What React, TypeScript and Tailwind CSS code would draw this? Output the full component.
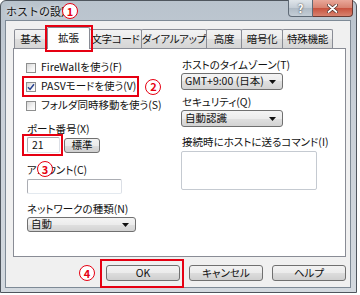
const RED = "border-[#e60012]";

function Circled({ n, className }: { n: string; className?: string }) {
  return (
    <span
      className={`flex h-[16px] w-[16px] items-center justify-center rounded-full border-[1.5px] ${RED} bg-white text-[11px] font-bold leading-none text-[#e60012] ${className ?? ""}`}
    >
      {n}
    </span>
  );
}

function CheckBox({ checked }: { checked?: boolean }) {
  return (
    <span className="flex h-[10px] w-[10px] shrink-0 items-center justify-center border border-[#8e8f8f] bg-[linear-gradient(135deg,#d6d6d6_0%,#f4f4f4_60%,#fdfdfd_100%)]">
      {checked && (
        <svg width="8" height="8" viewBox="0 0 8 8" aria-hidden="true">
          <path d="M1 4.3L3 6.4 7 1.2" stroke="#26418f" strokeWidth="1.5" fill="none" />
        </svg>
      )}
    </span>
  );
}

function Arrow() {
  return (
    <svg width="7" height="4" viewBox="0 0 7 4" aria-hidden="true" className="shrink-0">
      <path d="M0 0h7L3.5 4z" fill="#111" />
    </svg>
  );
}

function Select({ value, className }: { value: string; className: string }) {
  return (
    <div
      className={`flex items-center justify-between rounded-[3px] border border-[#707070] bg-[linear-gradient(#f4f4f4_0%,#ececec_50%,#e0e0e0_50%,#d3d3d3_100%)] pl-[3px] pr-[6px] ${className}`}
    >
      <span className="whitespace-nowrap leading-none">{value}</span>
      <Arrow />
    </div>
  );
}

function Label({ text, className }: { text: string; className?: string }) {
  return <div className={`flex h-[14px] items-center whitespace-nowrap leading-none ${className ?? ""}`}>{text}</div>;
}

function Check({ text, checked }: { text: string; checked?: boolean }) {
  return (
    <div className="flex h-[19px] items-center gap-[5px]">
      <CheckBox checked={checked} />
      <span className="whitespace-nowrap leading-none">{text}</span>
    </div>
  );
}

const btn =
  "flex h-[16px] w-[74px] items-center justify-center rounded-[3px] border border-[#707070] bg-[linear-gradient(#f2f2f2_0%,#ebebeb_50%,#dddddd_50%,#cfcfcf_100%)] leading-none";

const tabs = [
  { label: "基本", w: "w-[33px]" },
  { label: "拡張", w: "w-[43px]", sel: true },
  { label: "文字コード", w: "w-[53px]" },
  { label: "ダイアルアップ", w: "w-[66px]" },
  { label: "高度", w: "w-[36px]" },
  { label: "暗号化", w: "w-[42px]" },
  { label: "特殊機能", w: "w-[51px]" },
];

export default function App() {
  return (
    <div className="h-[295px] w-[360px] bg-white font-['Noto_Sans_CJK_JP',sans-serif] text-[10.5px] text-[#111] [font-feature-settings:'palt']">
      <div className="flex h-[293px] w-[357px] flex-col rounded-t-[6px] border border-[#4f565e] bg-[linear-gradient(180deg,#b9c3cd_0%,#c9d0d8_35%,#d3d9df_100%)] pb-[4px] pl-[4px] pr-[5px]">
        {/* title bar */}
        <div className="relative flex h-[19px] shrink-0 items-start">
          <span className="pl-[1px] pt-[3px] text-[11px] leading-[14px] [font-feature-settings:normal] [text-shadow:0_0_5px_#fff]">
            ホストの設定
          </span>
          <Circled n="1" className="absolute left-[57px] top-[2px]" />
          <div className="-mt-[1px] mr-[-2px] ml-auto flex h-[17px]">
            <div className="flex w-[25px] items-center justify-center rounded-bl-[4px] border border-t-0 border-[#5f6a76] bg-[linear-gradient(#dfe5ea_0%,#c3ccd5_50%,#aeb9c4_50%,#c4cdd6_100%)] text-[11px] font-bold leading-none text-white [text-shadow:0_0_2px_#222]">
              ?
            </div>
            <div className="flex w-[40px] items-center justify-center rounded-br-[4px] border border-l-0 border-t-0 border-[#6b3a33] bg-[linear-gradient(#e9a89a_0%,#d7816f_50%,#c7503c_50%,#d8826f_100%)]">
              <svg width="11" height="9" viewBox="0 0 11 9" aria-hidden="true">
                <path d="M1.5 1l8 7M9.5 1l-8 7" stroke="#4a2a25" strokeWidth="3.2" strokeLinecap="round" />
                <path d="M1.5 1l8 7M9.5 1l-8 7" stroke="#fff" strokeWidth="1.8" strokeLinecap="round" />
              </svg>
            </div>
          </div>
        </div>

        {/* client */}
        <div className="flex flex-1 flex-col border border-[#7e8a96] bg-[#f0f0f0] pl-[7px] pr-[4px] pt-[6px]">
          <div className="ml-[1px] flex h-[21px] items-end">
            {tabs.map((t) =>
              t.sel ? (
                <div
                  key={t.label}
                  className={`relative z-10 -mb-px flex h-[22px] items-center justify-center rounded-t-[2px] border border-b-0 border-[#898c95] bg-white ${t.w}`}
                >
                  <span className="leading-none">{t.label}</span>
                  <span className={`absolute -bottom-[3px] -left-[3px] -right-[4px] -top-[3px] border-2 ${RED}`} />
                </div>
              ) : (
                <div
                  key={t.label}
                  className={`-ml-px flex h-[19px] items-center justify-center whitespace-nowrap rounded-t-[2px] border border-b-0 border-[#898c95] bg-[linear-gradient(#f3f3f3_0%,#ebebeb_50%,#dedede_50%,#d6d6d6_100%)] leading-none tracking-[-0.3px] first:ml-0 ${t.w}`}
                >
                  {t.label}
                </div>
              )
            )}
          </div>

          {/* tab page */}
          <div className="flex h-[209px] w-[333px] border border-[#898c95] bg-white">
            <div className="flex w-[167px] flex-col pl-[12px] pt-[9px]">
              <Check text="FireWallを使う(F)" />
              <div className="flex h-[19px] items-center">
                <div className="relative flex items-center gap-[5px]">
                  <CheckBox checked />
                  <span className="whitespace-nowrap leading-none">PASVモードを使う(V)</span>
                  <span className={`absolute -bottom-[5px] -left-[4px] -right-[3px] -top-[5px] border-2 ${RED}`} />
                </div>
                <Circled n="2" className="ml-[9px]" />
              </div>
              <Check text="フォルダ同時移動を使う(S)" />

              <Label text="ポート番号(X)" className="ml-[1px] mt-[7px]" />
              <div className="ml-[1px] mt-[1px] flex h-[16px] items-center gap-[4px]">
                <div className="relative flex h-[16px] w-[33px] items-center rounded-[2px] border border-[#abadb3] border-b-[#e3e9ef] border-r-[#dbdfe6] bg-white pl-[4px] leading-none">
                  21
                  <span className={`absolute -bottom-[4px] -left-[6px] -right-[4px] -top-[4px] border-2 ${RED}`} />
                </div>
                <div className="flex h-[15px] w-[36px] items-center justify-center rounded-[3px] border border-[#707070] bg-[linear-gradient(#f2f2f2_0%,#ebebeb_50%,#dddddd_50%,#cfcfcf_100%)] leading-none">
                  標準
                </div>
              </div>

              <div className="relative ml-[1px] mt-[10px]">
                <Label text="アカウント(C)" />
                <Circled n="3" className="absolute -top-[2px] left-[10px]" />
              </div>
              <div className="ml-[1px] mt-[2px] h-[15px] w-[95px] rounded-[2px] border border-[#abadb3] border-b-[#e3e9ef] border-r-[#dbdfe6] bg-white" />

              <Label text="ネットワークの種類(N)" className="ml-[1px] mt-[8px]" />
              <Select value="自動" className="ml-[1px] mt-[1px] h-[15px] w-[109px]" />
            </div>

            <div className="flex flex-col pt-[9px]">
              <Label text="ホストのタイムゾーン(T)" className="ml-[1px]" />
              <Select value="GMT+9:00 (日本)" className="mt-[1px] h-[17px] w-[102px]" />
              <Label text="セキュリティ(Q)" className="ml-[1px] mt-[5px]" />
              <Select value="自動認識" className="mt-[1px] h-[17px] w-[102px]" />
              <Label text="接続時にホストに送るコマンド(I)" className="ml-[1px] mt-[8px]" />
              <div className="mt-[2px] h-[39px] w-[136px] rounded-[2px] border border-[#c5cad1] bg-white" />
            </div>
          </div>

          {/* dialog buttons */}
          <div className="mt-[8px] flex items-center justify-end gap-[9px]">
            <Circled n="4" className="mr-[2px]" />
            <div className="relative">
              <div className={`${btn} border-[#3c7fb1] bg-[linear-gradient(#eaf6fd_0%,#d9f0fc_50%,#bee6fd_50%,#a7d9f5_100%)]`}>
                OK
              </div>
              <span className={`absolute -bottom-[7px] -left-[6px] -right-[4px] -top-[6px] border-2 ${RED}`} />
            </div>
            <div className={btn}>キャンセル</div>
            <div className={btn}>ヘルプ</div>
          </div>
        </div>
      </div>
    </div>
  );
}
